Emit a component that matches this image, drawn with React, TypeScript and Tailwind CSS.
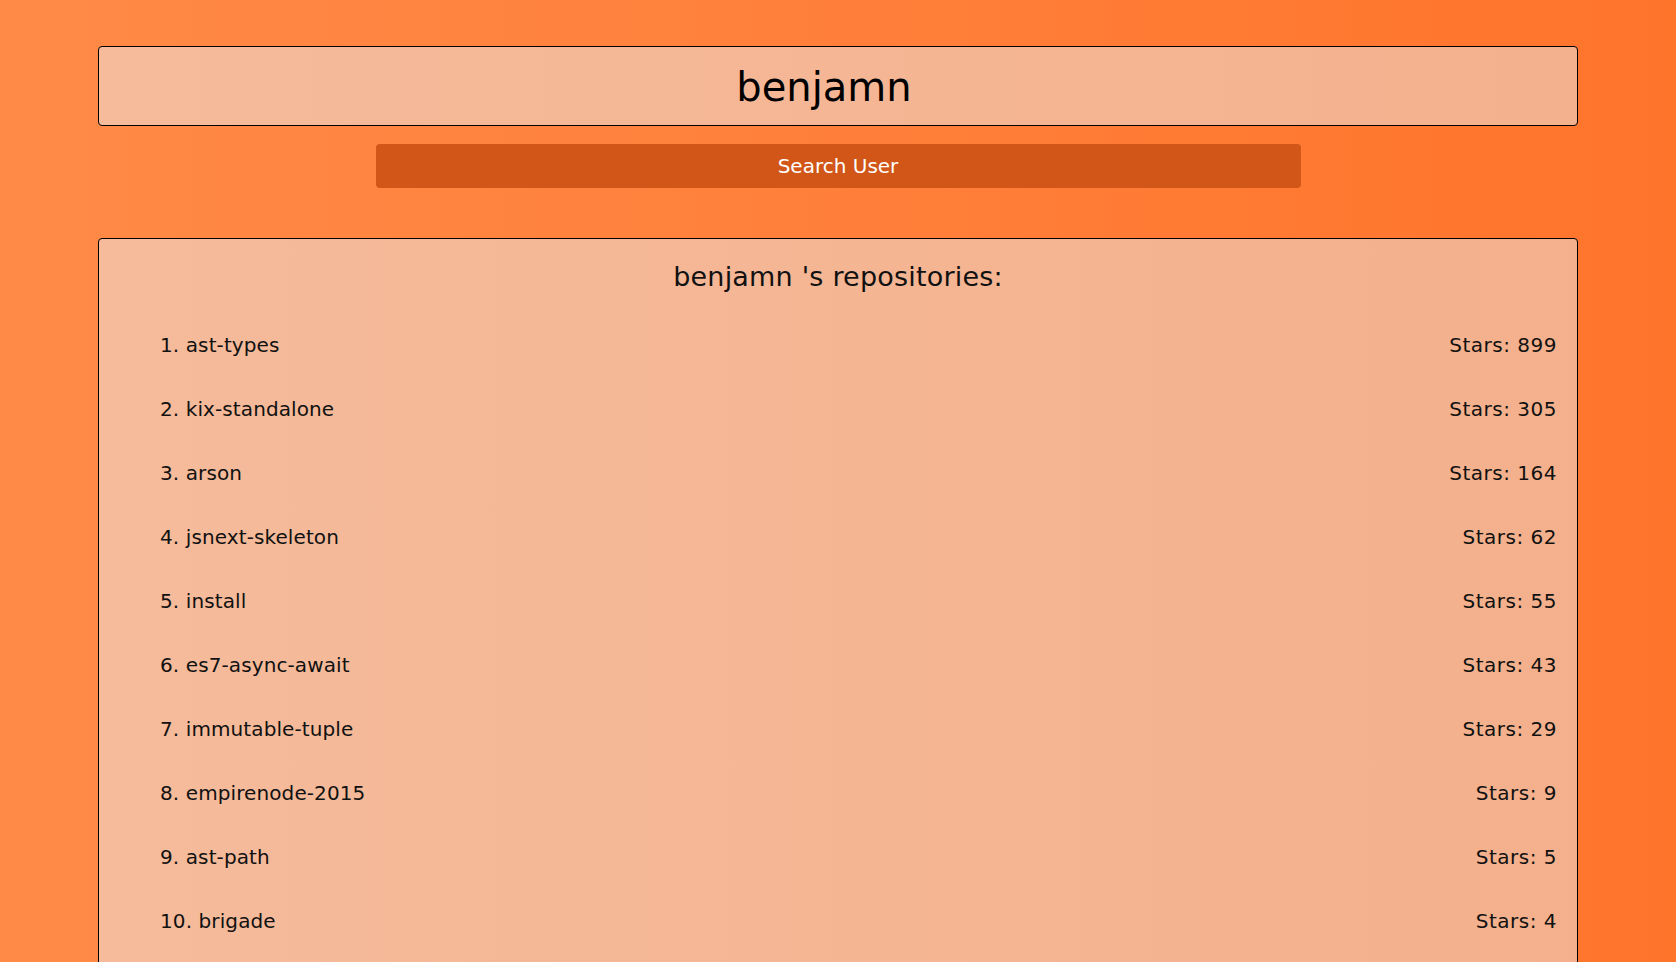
import { useState } from 'react'

const repos = [
  { name: 'ast-types', stars: 899 },
  { name: 'kix-standalone', stars: 305 },
  { name: 'arson', stars: 164 },
  { name: 'jsnext-skeleton', stars: 62 },
  { name: 'install', stars: 55 },
  { name: 'es7-async-await', stars: 43 },
  { name: 'immutable-tuple', stars: 29 },
  { name: 'empirenode-2015', stars: 9 },
  { name: 'ast-path', stars: 5 },
  { name: 'brigade', stars: 4 },
]

export default function App() {
  const [username, setUsername] = useState('benjamn')
  const [shown] = useState('benjamn')

  return (
    <div
      className="min-h-screen bg-linear-to-r from-[#ff8a47] to-[#ff742b] px-[98px] pt-[46px] pb-10 text-[#111]"
      style={{ fontFamily: '"DejaVu Sans", Verdana, sans-serif' }}
    >
      <form onSubmit={(e) => e.preventDefault()} className="flex flex-col items-center">
        <input
          type="text"
          value={username}
          onChange={(e) => setUsername(e.target.value)}
          className="w-full h-[80px] pt-[2px] pr-[28px] text-center text-[40px] text-black bg-linear-to-r from-[#f5bb9b] to-[#f4b18e] border border-black rounded-[4px] outline-none"
        />
        <button
          type="submit"
          className="mt-[18px] w-[925px] h-[44px] bg-[#d15617] text-white text-[20px] rounded-[4px]"
        >
          Search User
        </button>
      </form>

      {/* リポジトリ一覧 */}
      <div className="mt-[50px] border border-black rounded-[4px] bg-linear-to-r from-[#f5bb9b] to-[#f4b08c] pt-[22px] pb-10">
        <h2 className="text-center text-[27px] leading-[32px] tracking-[0.2px] font-normal">
          {shown} 's repositories:
        </h2>
        <ul className="mt-[20px] pl-[61px] pr-[20px]">
          {repos.map((repo, i) => (
            <li key={repo.name} className="flex justify-between text-[20px] leading-[64px]">
              <span className="tracking-[0.1px]">
                {i + 1}. {repo.name}
              </span>
              <span className="tracking-[0.5px]">Stars: {repo.stars}</span>
            </li>
          ))}
        </ul>
      </div>
    </div>
  )
}
